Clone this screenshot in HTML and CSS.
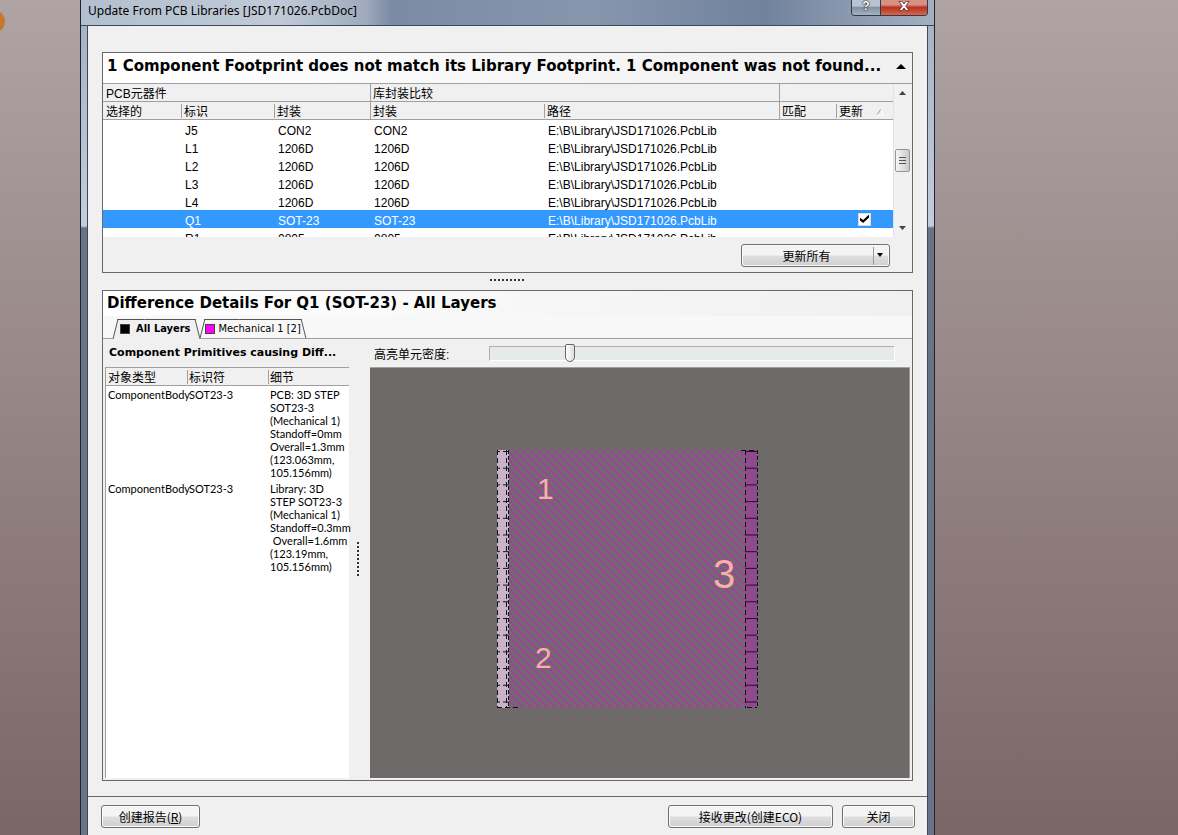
FILE: index.html
```
<!DOCTYPE html>
<html lang="zh-CN">
<head>
    <meta charset="UTF-8">
    <meta name="viewport" content="width=device-width, initial-scale=1.0">
    <title>Update From PCB Libraries</title>
    <link rel="stylesheet" href="styles.css">
</head>
<body>
    <div class="desktop_icon"></div>

    <div class="window">
        <header class="title_bar">
            <span class="title_text">Update From PCB Libraries [JSD171026.PcbDoc]</span>
            <div class="window_buttons">
                <button class="help_button" aria-label="Help">?</button>
                <button class="close_button" aria-label="Close">
                    <svg width="12" height="10" viewBox="0 0 12 10"><path d="M1 .5H4L6 3L8 .5H11L7.7 5L11 9.5H8L6 7L4 9.5H1L4.3 5Z" fill="#fff" stroke="#5c3030" stroke-width=".8"/></svg>
                </button>
            </div>
        </header>

        <main class="client">
            <!-- Footprint list -->
            <section class="panel">
                <div class="panel_head">
                    <h1>1 Component Footprint does not match its Library Footprint. 1 Component was not found...</h1>
                    <button class="collapse" aria-label="Collapse"><svg width="10" height="5" viewBox="0 0 10 5"><path d="M5 0L10 5H0Z"/></svg></button>
                </div>
                <div class="grid_area">
                    <div class="grid_scroll">
                        <table class="grid">
                            <colgroup>
                                <col class="c_sel"><col class="c_id"><col class="c_pkg"><col class="c_lib"><col><col class="c_small"><col class="c_small">
                            </colgroup>
                            <thead>
                                <tr>
                                    <th colspan="3">PCB元器件</th>
                                    <th class="full" colspan="2">库封装比较</th>
                                    <th class="full" colspan="2"></th>
                                </tr>
                                <tr>
                                    <th>选择的</th>
                                    <th class="short">标识</th>
                                    <th class="short">封装</th>
                                    <th class="full">封装</th>
                                    <th class="short">路径</th>
                                    <th class="full">匹配</th>
                                    <th class="short">更新<svg class="sort" width="8" height="8" viewBox="0 0 8 8"><path d="M1 7L5 1" stroke="#999" fill="none"/><path d="M5 1L7 7H1" stroke="#fff" fill="none"/></svg></th>
                                </tr>
                            </thead>
                            <tbody>
                                <tr><td></td><td>J5</td><td>CON2</td><td>CON2</td><td>E:\B\Library\JSD171026.PcbLib</td><td></td><td></td></tr>
                                <tr><td></td><td>L1</td><td>1206D</td><td>1206D</td><td>E:\B\Library\JSD171026.PcbLib</td><td></td><td></td></tr>
                                <tr><td></td><td>L2</td><td>1206D</td><td>1206D</td><td>E:\B\Library\JSD171026.PcbLib</td><td></td><td></td></tr>
                                <tr><td></td><td>L3</td><td>1206D</td><td>1206D</td><td>E:\B\Library\JSD171026.PcbLib</td><td></td><td></td></tr>
                                <tr><td></td><td>L4</td><td>1206D</td><td>1206D</td><td>E:\B\Library\JSD171026.PcbLib</td><td></td><td></td></tr>
                                <tr class="selected"><td></td><td>Q1</td><td>SOT-23</td><td>SOT-23</td><td>E:\B\Library\JSD171026.PcbLib</td><td></td><td class="check_cell"><input type="checkbox" aria-label="更新 Q1" checked></td></tr>
                                <tr><td></td><td>R1</td><td>0805</td><td>0805</td><td>E:\B\Library\JSD171026.PcbLib</td><td></td><td></td></tr>
                            </tbody>
                        </table>
                    </div>
                    <div class="scrollbar">
                        <svg width="7" height="4" viewBox="0 0 7 4"><path d="M3.500 0L7 4H0Z" fill="#444"/></svg>
                        <div class="scroll_thumb"></div>
                        <svg width="7" height="4" viewBox="0 0 7 4"><path d="M0 0H7L3.500 4Z" fill="#444"/></svg>
                    </div>
                </div>
                <div class="panel_foot">
                    <button class="btn split_btn"><span>更新所有</span><svg width="18" height="18" viewBox="0 0 18 18"><path d="M2.500 0V18" stroke="#999"/><path d="M6 6H12L9 10Z"/></svg></button>
                </div>
            </section>

            <div class="split_h"></div>

            <!-- Difference details -->
            <section class="panel details">
                <div class="details_head">
                    <h1>Difference Details For Q1 (SOT-23) - All Layers</h1>
                </div>
                <div class="tabs">
                    <button class="tab active"><i class="swatch black"></i>All Layers</button>
                    <button class="tab"><i class="swatch magenta"></i>Mechanical 1 [2]</button>
                </div>
                <div class="details_body">
                    <div class="primitives">
                        <h2>Component Primitives causing Diff...</h2>
                        <div class="prim_box">
                            <table class="prim">
                                <thead>
                                    <tr><th>对象类型</th><th class="short">标识符</th><th class="short">细节</th></tr>
                                </thead>
                                <tbody>
                                    <tr>
                                        <td>ComponentBody</td>
                                        <td>SOT23-3</td>
                                        <td>PCB: 3D STEP<br>SOT23-3<br>(Mechanical 1)<br>Standoff=0mm<br>Overall=1.3mm<br>(123.063mm,<br>105.156mm)</td>
                                    </tr>
                                    <tr>
                                        <td>ComponentBody</td>
                                        <td>SOT23-3</td>
                                        <td>Library: 3D<br>STEP SOT23-3<br>(Mechanical 1)<br>Standoff=0.3mm<br>&nbsp;Overall=1.6mm<br>(123.19mm,<br>105.156mm)</td>
                                    </tr>
                                </tbody>
                            </table>
                        </div>
                    </div>
                    <div class="split_v"></div>
                    <div class="preview">
                        <div class="density">
                            <label for="density">高亮单元密度:</label>
                            <input type="range" id="density" min="0" max="100" value="19">
                        </div>
                        <div class="canvas">
                            <svg width="262" height="260" viewBox="0 0 262 260">
                                <defs>
                                    <pattern id="hatch" width="8" height="8" patternUnits="userSpaceOnUse">
                                        <path d="M0 0H3L8 5V8L0 0M0 5L3 8H0Z" fill="#a03f9c"/>
                                    </pattern>
                                    <pattern id="ticksLeft" width="12" height="16.700" patternUnits="userSpaceOnUse">
                                        <path d="M0 1.500H3M6 1.500H12" stroke="#111"/>
                                    </pattern>
                                    <pattern id="ticksRight" x="248" width="12" height="16.700" patternUnits="userSpaceOnUse">
                                        <path d="M0 1.500H12" stroke="#2a0a2a"/>
                                    </pattern>
                                </defs>
                                <rect x="12" width="236" height="258" fill="#706a6e"/>
                                <rect x="12" width="236" height="258" fill="url(#hatch)"/>
                                <rect width="12" height="258" fill="#c9b3cb"/>
                                <rect width="12" height="258" fill="url(#ticksLeft)"/>
                                <rect x="248" width="12" height="258" fill="#8e4a8c"/>
                                <rect x="248" width="12" height="258" fill="url(#ticksRight)"/>
                                <g fill="none" stroke="#111">
                                    <path d="M.5 0V258M9.500 0V258M248.500 0V258" stroke-dasharray="5 3"/>
                                    <path d="M11.500 0V258M260.500 0V258" stroke-dasharray="4 2"/>
                                    <path d="M0 257.500H24M244 .5H260M250 257.500H260" stroke-dasharray="5 3"/>
                                </g>
                                <g class="marks">
                                    <text x="40" y="49" class="mark_small">1</text>
                                    <text x="38" y="218" class="mark_small">2</text>
                                    <text x="216" y="138" class="mark_big">3</text>
                                </g>
                            </svg>
                        </div>
                    </div>
                </div>
            </section>
        </main>

        <footer class="actions">
            <button class="btn report">创建报告(<u>R</u>)</button>
            <button class="btn accept">接收更改(创建ECO)</button>
            <button class="btn close">关闭</button>
        </footer>
    </div>
</body>
</html>
```
FILE: styles.css
```
* {
    margin: 0;
    padding: 0;
    box-sizing: border-box;
}

body {
    min-height: 100vh;
    display: flex;
    padding: 0 243px 0 80px;
    font-family: "Liberation Sans", "Noto Sans CJK SC", sans-serif;
    font-size: 12px;
    color: #000;
    background: linear-gradient(#afa3a3, #7b6666);
}

button,
input {
    font: inherit;
    color: inherit;
}

.desktop_icon {
    position: absolute;
    left: -18px;
    top: 10px;
    width: 23px;
    height: 23px;
    border-radius: 50%;
    background: #c47a2c;
}

/* Window frame */
.window {
    flex: 1;
    min-width: 0;
    display: flex;
    flex-direction: column;
    padding: 0 6px;
    border: solid #1b2535;
    border-width: 0 1px;
    background: linear-gradient(#a3b0c2 0, #c3cddb 226px, #687386 228px, #687386 100%);
}

.title_bar {
    display: flex;
    justify-content: space-between;
    height: 26px;
    margin: 0 -6px;
    padding: 0 6px;
    border-bottom: 1px solid #3d485a;
    background: linear-gradient(90deg, #b3bfce 0, #c0cad7 200px, #9fabbd 285px, #7b8ba4 310px, #8696ad 60%, #71829d 80%, #a3b0c1);
}

.title_text {
    font-family: "Noto Sans", sans-serif;
    font-size: 12px;
    line-height: 21px;
    padding-left: 1px;
}

.window_buttons {
    display: flex;
    height: 16px;
    border: 1px solid #2f3a4b;
    border-top: 0;
    border-radius: 0 0 4px 4px;
    overflow: hidden;
}

.window_buttons button {
    border: 0;
    display: flex;
    justify-content: center;
    align-items: center;
    padding-bottom: 4px;
}

.window_buttons .help_button {
    width: 28px;
    font-weight: bold;
    color: #fff;
    text-shadow: 0 0 1px #000, 0 0 2px #000;
    background: linear-gradient(#b9c3d1 40%, #8391a6 50%, #a4b1c2);
}

.window_buttons .close_button {
    width: 47px;
    border-left: 1px solid #2f3a4b;
    background: linear-gradient(#d79083 30%, #b93422 50%, #d8664c);
}

.client {
    flex: 1;
    display: flex;
    flex-direction: column;
    padding: 26px 14px 15px;
    background: #f0f0f0;
    border: solid #3d485a;
    border-width: 0 1px;
}

/* Panels */
.panel {
    border: 1px solid #696969;
    background: #f0f0f0;
    min-width: 0;
}

.panel_head {
    display: flex;
    justify-content: space-between;
    align-items: center;
    height: 31px;
    padding: 0 6px 4px 4px;
    border-bottom: 1px solid #a0a0a0;
    background: linear-gradient(90deg, #fff, #f0f0f0);
}

h1 {
    font: bold 15px/24px "DejaVu Sans", sans-serif;
    white-space: nowrap;
}

.collapse {
    display: flex;
    border: 0;
    background: none;
}

.grid_area {
    display: flex;
    padding-right: 2px;
}

.grid_scroll {
    flex: 1;
    height: 153px;
    overflow: hidden;
    background: #fff;
}

table {
    width: 100%;
    table-layout: fixed;
    border-collapse: separate;
    border-spacing: 0;
}

th {
    height: 18px;
    font-weight: normal;
    text-align: left;
    line-height: 14px;
    padding: 3px 3px 0;
    white-space: nowrap;
    background: #f0f0f0;
    border-bottom: 1px solid #a0a0a0;
}

.short {
    background: linear-gradient(#a0a0a0, #a0a0a0) no-repeat 0 2px / 1px 14px #f0f0f0;
}

.grid .full {
    background: linear-gradient(#a0a0a0, #a0a0a0) no-repeat 0 0 / 1px 100% #f0f0f0;
}

.grid td {
    height: 18px;
    padding: 4px 4px 0;
    line-height: 14px;
    font-size: 12px;
    white-space: nowrap;
}

.c_sel { width: 78px; }
.c_id { width: 93px; }
.c_pkg { width: 96px; }
.c_lib { width: 174px; }
.c_small { width: 57px; }

.sort {
    margin-left: 13px;
}

.selected td {
    background: #3399ff;
    color: #fff;
}

.grid .check_cell {
    padding: 0;
    text-align: center;
}

.check_cell input {
    appearance: none;
    display: block;
    width: 13px;
    height: 13px;
    margin: 0 auto;
    background: #fff;
    border: 1px solid #ddd;
}

.check_cell input:checked::before {
    content: "";
    display: block;
    width: 9px;
    height: 9px;
    margin: 1px;
    background: #000;
    clip-path: polygon(0 35%, 35% 62%, 100% 0, 100% 32%, 35% 95%, 0 68%);
}

.scrollbar {
    width: 17px;
    display: flex;
    flex-direction: column;
    justify-content: space-between;
    align-items: center;
    padding: 7px 0;
    background: #f1f1f1;
    border-left: 1px solid #e2e2e2;
}

.scroll_thumb {
    width: 15px;
    height: 23px;
    border: 1px solid #979797;
    border-radius: 2px;
    background:
        repeating-linear-gradient(#555 0 1px, transparent 1px 3px) center / 7px 8px no-repeat,
        linear-gradient(90deg, #f6f6f6, #cacaca);
}

.panel_foot {
    display: flex;
    justify-content: flex-end;
    padding: 7px 22px 5px;
}

/* Buttons */
.btn {
    height: 23px;
    border: 1px solid #707070;
    border-radius: 3px;
    background: linear-gradient(#f4f4f4 48%, #dedede 52%, #cfcfcf);
    box-shadow: inset 0 0 0 1px #fafafa;
    font-family: "Noto Sans CJK SC", sans-serif;
    line-height: 20px;
    white-space: nowrap;
}

.split_btn {
    width: 149px;
    display: flex;
    align-items: center;
}

.split_btn span {
    flex: 1;
}

/* Dotted grips */
.split_h {
    width: 35px;
    height: 2px;
    margin: 6px auto 9px;
    background: repeating-linear-gradient(90deg, #333 0 2px, transparent 2px 4px);
}

.split_v {
    width: 2px;
    height: 34px;
    margin: 0 11px 0 8px;
    align-self: center;
    background: repeating-linear-gradient(#333 0 2px, transparent 2px 4px);
}

/* Details */
.details {
    flex: 1;
    display: flex;
    flex-direction: column;
}

.details_head {
    height: 25px;
    padding-left: 4px;
    background: linear-gradient(90deg, #fff, #f0f0f0);
}

.tabs {
    display: flex;
    gap: 4px;
    height: 23px;
    padding: 3px 0 0 12px;
    border-bottom: 1px solid #a0a0a0;
    background: #f8f8f8;
}

.tab {
    position: relative;
    z-index: 0;
    display: flex;
    align-items: center;
    gap: 3px;
    height: 20px;
    padding: 0 3px;
    border: 0;
    background: none;
    font: 11px/18px "DejaVu Sans Condensed", "DejaVu Sans", sans-serif;
    white-space: nowrap;
}

.tab::before,
.tab::after {
    content: "";
    position: absolute;
    z-index: -1;
    top: 0;
    bottom: 1px;
    width: 60%;
    border-top: 1px solid #555;
    background: #f8f8f8;
}

.tab::before {
    left: 0;
    border-left: 1px solid #555;
    transform: skewX(-14deg);
}

.tab::after {
    right: 0;
    border-right: 1px solid #555;
    transform: skewX(14deg);
}

.tab.active {
    font-weight: bold;
    gap: 6px;
    padding: 0 8px 0 5px;
}

.tab.active::before,
.tab.active::after {
    bottom: 0;
    background: #f0f0f0;
}

.swatch {
    width: 10px;
    height: 10px;
    border: 1px solid #444;
}

.black { background: #000; }
.magenta { background: #ff00ff; }

.details_body {
    flex: 1;
    display: flex;
    padding: 0 2px 2px;
}

.primitives {
    width: 244px;
    display: flex;
    flex-direction: column;
}

h2 {
    height: 28px;
    padding-left: 4px;
    font: bold 11px/28px "DejaVu Sans", sans-serif;
    white-space: nowrap;
}

.prim_box {
    flex: 1;
    background: #fff;
    border-left: 1px solid #a0a0a0;
}

.prim {
    border-top: 1px solid #a0a0a0;
}

.prim th {
    padding: 2px 2px 0;
}

.prim td {
    padding: 2px 0 1px 2px;
    vertical-align: top;
    font-family: Lato, "Liberation Sans", sans-serif;
    font-size: 11px;
    line-height: 13px;
    white-space: nowrap;
}

.preview {
    flex: 1;
    min-width: 0;
    display: flex;
    flex-direction: column;
}

.density {
    display: flex;
    align-items: center;
    gap: 40px;
    height: 29px;
    padding: 0 15px 0 4px;
    border-bottom: 1px solid #a0a0a0;
}

.density input {
    appearance: none;
    flex: 1;
    min-width: 0;
    height: 15px;
    background: #e7eaea;
    border: 1px solid #b0b0b0;
    border-right-color: #fff;
    border-bottom-color: #fff;
}

.density input::-webkit-slider-thumb {
    appearance: none;
    width: 10px;
    height: 18px;
    border: 1px solid #666;
    border-radius: 2px 2px 5px 5px;
    background: linear-gradient(90deg, #fff, #ddd);
}

.canvas {
    flex: 1;
    padding: 82px 0 0 127px;
    background: #6e6a69;
    border-right: 1px solid #999;
    overflow: hidden;
}

.marks {
    fill: #f6b0a8;
    font-family: "Liberation Sans", sans-serif;
}

.mark_small { font-size: 30px; }
.mark_big { font-size: 40px; }

/* Bottom actions */
.actions {
    display: flex;
    gap: 9px;
    height: 39px;
    padding: 9px 12px 0 13px;
    background: #f0f0f0;
    border: solid #3d485a;
    border-width: 0 1px;
    box-shadow: inset 0 1px #696969;
}

.report {
    width: 99px;
    margin-right: auto;
}

.accept { width: 165px; }
.close { width: 73px; }
```
